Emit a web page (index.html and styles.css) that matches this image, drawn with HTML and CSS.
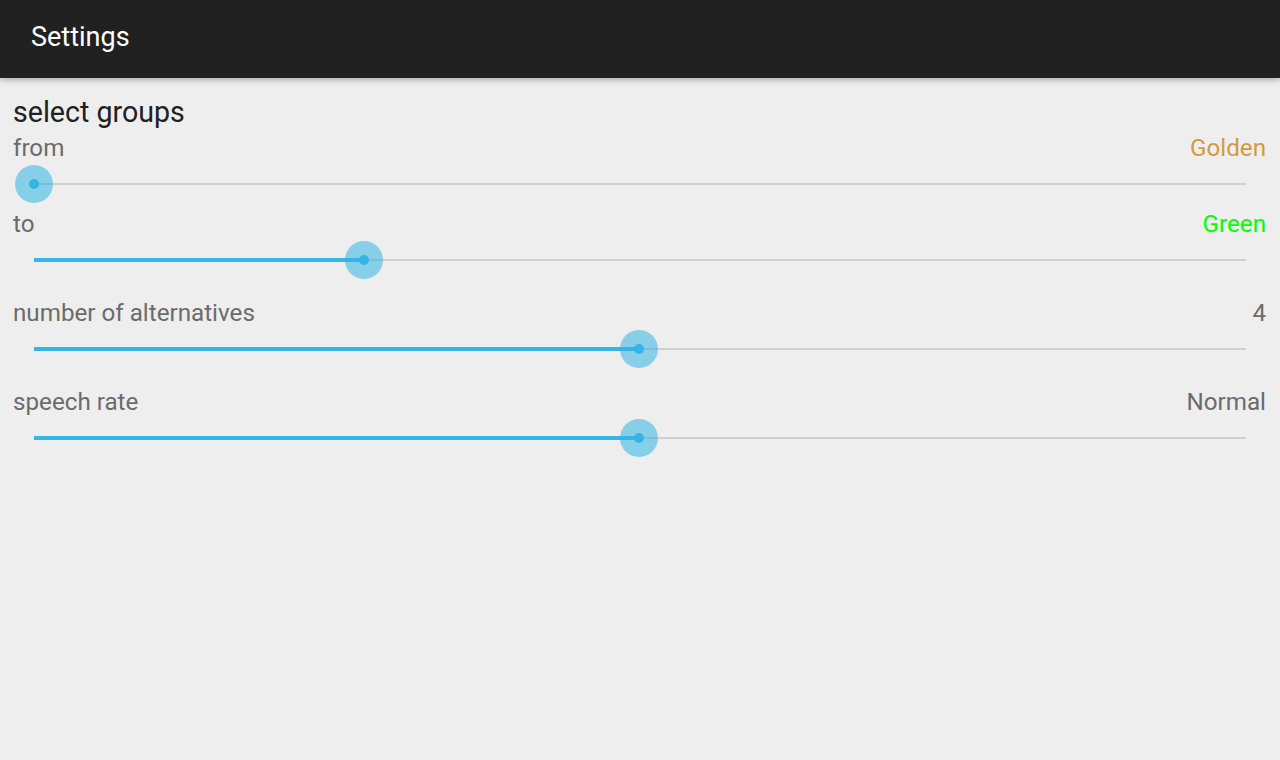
FILE: index.html
```html
<!DOCTYPE html>
<html>
<head>
<meta charset="utf-8">
<link rel="stylesheet" href="styles.css">
</head>
<body>
<header class="appbar"><span class="appbar-title">Settings</span></header>
<main class="content">
  <h2 class="section-title">select groups</h2>
  <div class="group">
    <div class="pref">
      <div class="pref-head"><span class="pref-label">from</span><span class="pref-value golden">Golden</span></div>
      <div class="slider"><div class="track"></div><div class="fill" style="width:0%"></div><div class="thumb" style="left:0%"></div></div>
    </div>
    <div class="pref">
      <div class="pref-head"><span class="pref-label">to</span><span class="pref-value green">Green</span></div>
      <div class="slider"><div class="track"></div><div class="fill" style="width:27.2%"></div><div class="thumb" style="left:27.2%"></div></div>
    </div>
  </div>
  <div class="group">
    <div class="pref">
      <div class="pref-head"><span class="pref-label">number of alternatives</span><span class="pref-value">4</span></div>
      <div class="slider"><div class="track"></div><div class="fill" style="width:49.9%"></div><div class="thumb" style="left:49.9%"></div></div>
    </div>
  </div>
  <div class="group">
    <div class="pref">
      <div class="pref-head"><span class="pref-label">speech rate</span><span class="pref-value">Normal</span></div>
      <div class="slider"><div class="track"></div><div class="fill" style="width:49.9%"></div><div class="thumb" style="left:49.9%"></div></div>
    </div>
  </div>
</main>
</body>
</html>
```
FILE: styles.css
```css
html, body {
  margin: 0;
  padding: 0;
  height: 100%;
}
body {
  background: #eeeeee;
  font-family: Roboto, "Noto Sans", sans-serif;
  overflow: hidden;
}
.appbar {
  height: 78px;
  background: #212121;
  display: flex;
  align-items: center;
  padding-left: 31px;
  box-shadow: 0 2px 6px rgba(0,0,0,0.28);
  position: relative;
  z-index: 1;
}
.appbar-title {
  color: #ffffff;
  font-size: 27px;
  line-height: 30px;
  margin-top: -4px;
}
.content {
  padding: 18px 14px 0 13px;
}
.section-title {
  margin: 0 0 8px 0;
  font-weight: normal;
  font-size: 28.6px;
  line-height: 32px;
  color: #212121;
}
.group {
  display: flex;
  flex-direction: column;
  gap: 4px;
  margin-bottom: 17px;
}
.pref-head {
  display: flex;
  justify-content: space-between;
  font-size: 24.2px;
  line-height: 24px;
  color: #6b6b6b;
}
.golden { color: #d29c3c; }
.green { color: #00ff00; }
.slider {
  position: relative;
  height: 48px;
  margin: 0 20px 0 21px;
}
.track {
  position: absolute;
  left: 0;
  right: 0;
  top: 23px;
  height: 2px;
  background: #cfcfcf;
}
.fill {
  position: absolute;
  left: 0;
  top: 22px;
  height: 4px;
  background: #33b5e5;
}
.thumb {
  position: absolute;
  top: 24px;
  width: 38px;
  height: 38px;
  margin: -19px 0 0 -19px;
  border-radius: 50%;
  background: rgba(51,181,229,0.55);
}
.thumb::after {
  content: "";
  position: absolute;
  left: 14px;
  top: 14px;
  width: 10px;
  height: 10px;
  border-radius: 50%;
  background: #33b5e5;
}
```
